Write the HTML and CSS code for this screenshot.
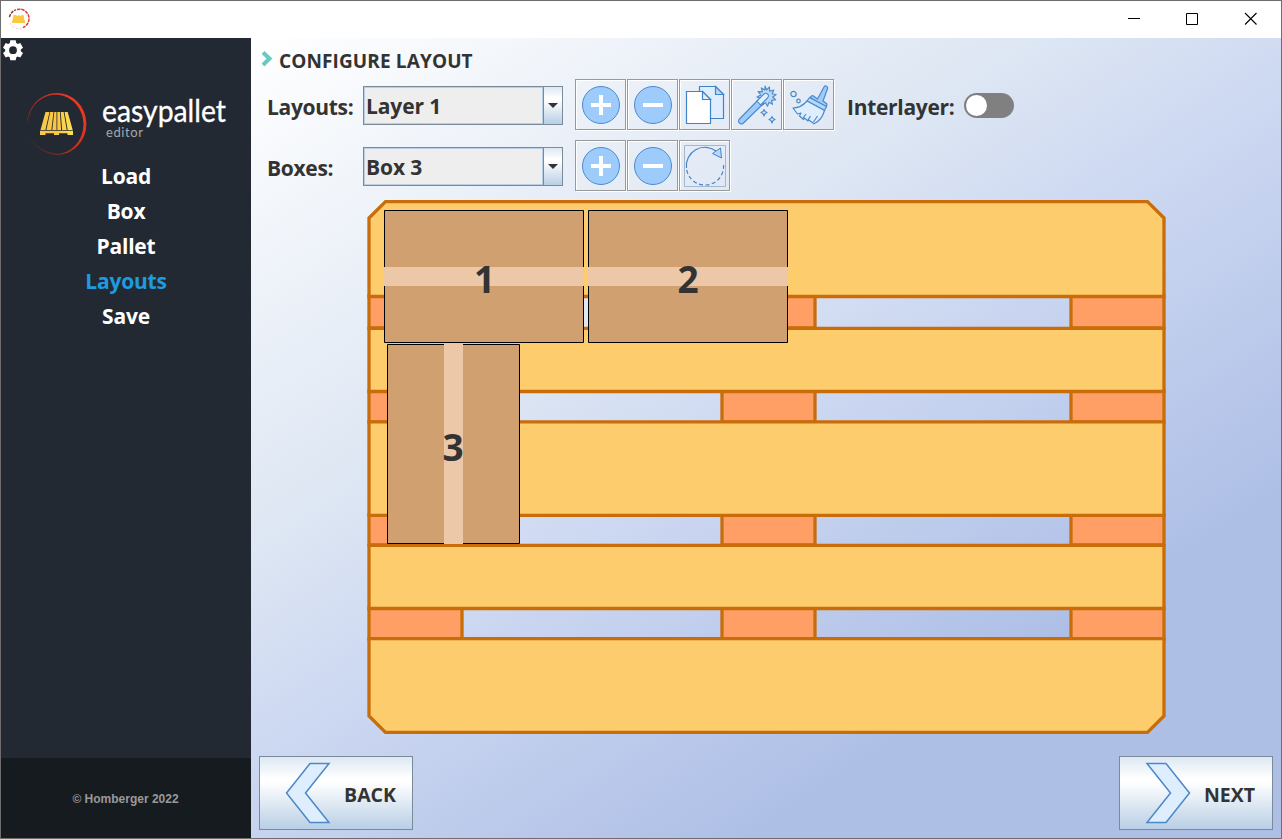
FILE: index.html
```
<!DOCTYPE html>
<html lang="en">
<head>
<meta charset="utf-8">
<title>easypallet editor</title>
<link rel="stylesheet" href="styles.css">
</head>
<body>
<svg class="defs" width="0" height="0">
  <defs>
    <linearGradient id="ring" x1="0" y1="0.85" x2="0.9" y2="0.3">
      <stop offset="0" stop-color="#232932"/><stop offset=".15" stop-color="#4a292d"/><stop offset=".5" stop-color="#b02e24"/><stop offset="1" stop-color="#f0361f"/>
    </linearGradient>
    <linearGradient id="gold" x1="0" y1="0" x2="1" y2="0">
      <stop offset="0" stop-color="#fbc94a"/><stop offset=".5" stop-color="#f9c442"/><stop offset="1" stop-color="#fbe253"/>
    </linearGradient>
    <symbol id="slats" viewBox="0 0 33 24">
      <path fill="url(#gold)" d="M5.500 0h4L5.400 18H.5zM10.200 0h3.300L11.400 18H6.400zM14.300 0h2.200v18h-4.200zM17.300 0h2.600l1.200 18h-3.800zM20.700 0h3l3 18h-4.600zM24.500 0h3.200l5 18h-5z"/>
      <path fill="url(#gold)" d="M0 18.700h33V23h-5.500v-1.800H19V23h-5v-1.800H5.500V23H0z"/>
    </symbol>
    <symbol id="plus" viewBox="0 0 40 40"><circle cx="20" cy="20" r="18.500" fill="#9dcbfb" stroke="#4d8bcc"/><path d="M20 10v20M10 20h20" stroke="#fff" stroke-width="4"/></symbol>
    <symbol id="minus" viewBox="0 0 40 40"><circle cx="20" cy="20" r="18.500" fill="#9dcbfb" stroke="#4d8bcc"/><path d="M10 20h20" stroke="#fff" stroke-width="4"/></symbol>
  </defs>
</svg>
<div class="window">
  <header class="titlebar">
    <svg class="app-icon" width="22" height="22" viewBox="0 0 22 22">
      <path d="M1.500 9A9.500 9.500 0 0 1 8 1.900" fill="none" stroke="#8b3035" stroke-width="1.500" stroke-dasharray="3 1"/>
      <path d="M9 1.500A9.500 9.500 0 0 1 15 19.500" fill="none" stroke="#e03c35" stroke-width="1.500" stroke-dasharray="3.500 .8"/>
      <path d="M2 15A9.500 9.500 0 0 0 14 20" fill="none" stroke="#f4c5c4" stroke-dasharray="2 2"/>
      <path d="M5.500 7H8l1.500 1L11 7l1.500 1L14 7h1.500l1 5.500H17V15H4v-2.500h.7z" fill="#fac93f"/>
    </svg>
    <svg class="controls" width="132" height="14" viewBox="0 0 132 14">
      <path d="M1 6.500h12" stroke="#000"/><path d="M59.500 1.500h11v11h-11z" fill="none" stroke="#000"/><path d="m118 1 11.500 11.500M129.500 1 118 12.500" stroke="#000" stroke-width="1.100"/>
    </svg>
  </header>
  <div class="body">
    <aside class="sidebar">
      <svg class="gear" width="24" height="24" viewBox="0 0 24 24"><path fill="#fff" fill-rule="evenodd" d="M9.300 1.200 8.800 4a8 8 0 0 0-1.600 1L4.700 4 2 8.700l2.200 1.700a8 8 0 0 0 0 1.800L2 14l2.700 4.500 2.500-1a8 8 0 0 0 1.600 1l.5 2.700h5.400l.5-2.700a8 8 0 0 0 1.600-1l2.500 1L22 14l-2.200-1.800a8 8 0 0 0 0-1.800L22 8.700 19.300 4l-2.500 1a8 8 0 0 0-1.600-1l-.5-2.800zM12 7.300a3.900 3.900 0 1 1 0 7.800 3.900 3.900 0 0 1 0-7.800z"/></svg>
      <div class="brand">
        <svg class="brand-mark" width="62" height="64" viewBox="0 0 62 64">
          <path fill="url(#ring)" d="M1 33A29.700 31 0 1 1 31 63Q12 61 4 46Q14 60 31 62A27.800 29.700 0 1 0 2.200 28z"/>
          <use href="#slats" x="14" y="20" width="33" height="24"/>
        </svg>
        <svg class="brand-name" width="140" height="64" viewBox="0 0 140 64">
          <text class="name" x="2" y="29.500" textLength="124" lengthAdjust="spacingAndGlyphs">easypallet</text>
          <text class="sub" x="6" y="44.500" textLength="37">editor</text>
        </svg>
      </div>
      <nav class="menu">
        <a>Load</a><a>Box</a><a>Pallet</a><a class="active">Layouts</a><a>Save</a>
      </nav>
      <footer class="copyright">© Homberger 2022</footer>
    </aside>
    <main class="content">
      <h1 class="heading"><svg width="12" height="18" viewBox="0 0 12 18"><path d="m2 2.500 6.500 6L2 15" fill="none" stroke="#66ccc2" stroke-width="4"/></svg><span>CONFIGURE LAYOUT</span></h1>
      <div class="row">
        <label class="label">Layouts:</label>
        <div class="combo"><span>Layer 1</span><i></i></div>
        <div class="tools">
          <button><svg width="40" height="40"><use href="#plus"/></svg></button>
          <button><svg width="40" height="40"><use href="#minus"/></svg></button>
          <button><svg width="40" height="40" viewBox="0 0 40 40" stroke="#4084c8" stroke-width="1.200"><path fill="#deeeff" d="M14.500 1.500h16l8 8v24h-24z"/><path fill="#b9d9fb" d="M30.500 1.500v8h8z"/><path fill="#fff" d="M1.500 6.500h16l8 8v24h-24z"/><path fill="#deeeff" d="M17.500 6.500v8h8z"/></svg></button>
          <button><svg width="40" height="40" viewBox="0 0 40 40" stroke="#4b89c9" stroke-width="1.100" stroke-linejoin="round">
            <path fill="#b8d9fb" d="m28 1 1.500 4 3-3 .2 4.200 4-1.200-1.500 3.700 4 .8-3.500 2.500 3 2.800-4.200.6 1 4-3.500-2.200-1.500 4-2-3.500-3 2.500.2-4-4 .6 2.200-3.600-4-1.200 4-2-2.800-3.400 4.200.3-1-4 3.600 2z"/>
            <path fill="#9dcbfb" d="m22 14 4.500 4.500L6 38.500q-1.500 1-3 0l-1-1q-1-1.500 0-3z"/><path fill="#e0f0ff" d="m20 16 7-7q1.500-1.500 3.500 0t0 4l-7 7z"/>
            <path fill="#deeeff" d="m27 24.500 1 2 2 1-2 1-1 2.500-1-2.500-2-1 2-1zM35 31.500l1 2 2 1-2 1-1 2.500-1-2.500-2-1 2-1z"/></svg></button>
          <button><svg width="40" height="40" viewBox="0 0 40 40" stroke="#4b89c9" stroke-width="1.200" stroke-linejoin="round">
            <circle cx="4.500" cy="9" r="2.700" fill="none"/><circle cx="9.500" cy="16" r="1.800" fill="none"/>
            <path fill="#9dcbfb" d="m28.500 14 6.500-12q1-1.500 2.500-.8t1 2.500L34 16l3.500 2.500q1 1.200-.5 3.500L21 12.500q2-2.500 3.500-1.500z"/>
            <path fill="#b5d7fa" d="m20.500 12.500 17 9-2 4-17.500-9.500z"/><path fill="#deeeff" d="m18 16 17.500 9.500Q33 35 25 38.800l-5.500-4-.5 1.200-3.500-3-1 1.500-4-3.500 1.500-3-3.500 1-4.500-6Q12 23 18 16z"/><path fill="none" d="m19 35 2.500-4M24.500 37l4-6M14 33l3-4"/></svg></button>
        </div>
        <label class="label inter">Interlayer:</label>
        <span class="toggle"></span>
      </div>
      <div class="row second">
        <label class="label">Boxes:</label>
        <div class="combo"><span>Box 3</span><i></i></div>
        <div class="tools">
          <button><svg width="40" height="40"><use href="#plus"/></svg></button>
          <button><svg width="40" height="40"><use href="#minus"/></svg></button>
          <button><svg width="44" height="44" viewBox="0 0 44 44"><path d="M1.500 1.500h41v41h-41z" fill="none" stroke="#a3b8cc"/><path d="M3.500 24A18.500 18.500 0 0 1 33 7" fill="none" stroke="#4485c9" stroke-width="1.200"/><path d="M40.500 21A18.500 18.500 0 0 1 3.500 24" fill="none" stroke="#4485c9" stroke-width="1.200" stroke-dasharray="4 2.500"/><path d="M29.500 9.500 37.500 4l1 10z" fill="#b9d9fb" stroke="#4485c9"/></svg></button>
        </div>
      </div>
      <svg class="pallet" width="800" height="536" viewBox="366 199 800 536">
        <g stroke="#c96d0b" stroke-width="3.300">
          <g fill="#ff9f66">
            <path d="M369 296h93v32h-93zM722 296h93v32h-93zM1071 296h93v32h-93z"/>
            <path d="M369 391h93v31h-93zM722 391h93v31h-93zM1071 391h93v31h-93z"/>
            <path d="M369 515h93v30h-93zM722 515h93v30h-93zM1071 515h93v30h-93z"/>
            <path d="M369 608h93v31h-93zM722 608h93v31h-93zM1071 608h93v31h-93z"/>
          </g>
          <g fill="#fdcc6d">
            <path d="M369 296.500V218l16.500-16.300h762L1164 218v78.500z"/>
            <path d="M369 328.300h795v63.200H369zM369 421.800h795v93.600H369zM369 545.300h795v63.200H369z"/>
            <path d="M369 638.700h795V716l-16.500 16.300h-762L369 716z"/>
          </g>
        </g>
        <g fill="#d0a071" stroke="#000">
          <path d="M384.500 210.500h199v132h-199zM588.500 210.500h199v132h-199zM387.500 344.500h132v199h-132z"/>
        </g>
        <path fill="#ecc8a9" d="M384 267h200v19H384zM588 267h200v19H588zM444 344h19v200h-19z"/>
        <g class="box-no"><text x="484.500" y="293">1</text><text x="688" y="293">2</text><text x="453" y="461">3</text></g>
      </svg>
      <div class="actions">
        <button class="nav"><svg width="46" height="64" viewBox="0 0 46 64"><path d="M25 2.500h19L20.500 32 44 61.500H25L1.500 32z" fill="#deeeff" stroke="#4a88c9" stroke-width="1.500"/></svg><span>BACK</span></button>
        <button class="nav next"><svg width="46" height="64" viewBox="0 0 46 64"><path d="M21 2.500H2L25.500 32 2 61.500h19L44.500 32z" fill="#deeeff" stroke="#4a88c9" stroke-width="1.500"/></svg><span>NEXT</span></button>
      </div>
    </main>
  </div>
</div>
</body>
</html>
```
FILE: styles.css
```
* { box-sizing: border-box; }
body { margin: 0; font-family: "Open Sans", "Noto Sans", sans-serif; font-weight: 700; color: #333; overflow: hidden; }
.defs { position: absolute; }
.window { width: 1282px; height: 839px; border: 1px solid #6f6d6d; display: flex; flex-direction: column; }
.titlebar { height: 37px; flex: none; background: #fff; display: flex; align-items: center; justify-content: space-between; padding: 0 22px 1px 7px; }
.body { flex: 1; display: flex; min-height: 0; }
.sidebar { width: 250px; background: #232932; display: flex; flex-direction: column; }
.gear { flex: none; display: block; margin: 1px 0 0 0; }
.brand { display: flex; height: 64px; margin: 29px 0 0 25px; }
.brand-name { margin-left: 12px; overflow: visible; }
.brand-mark { flex: none; }
.name { font: 400 31px Lato, sans-serif; fill: #fff; stroke: #fff; stroke-width: .3px; }
.sub { font: 400 13px Lato, sans-serif; fill: #a5a8ac; }
.menu { display: flex; flex-direction: column; align-items: center; margin-top: 3px; color: #fff; }
.menu a { height: 35px; line-height: 35px; font-size: 21px; letter-spacing: -.2px; }
.menu .active { color: #1e9be0; }
.copyright { margin-top: auto; height: 80px; background: #161b20; color: #999; font: 700 12px/82px "Liberation Sans", Arial, sans-serif; text-align: center; padding-right: 1px; }
.content { flex: 1; display: flex; flex-direction: column; background: linear-gradient(147deg, #fff 0%, #dde6f3 35%, #ced9f2 48%, #aebfe6 76.500%, #aebfe6 100%); }
.heading { display: flex; align-items: center; gap: 6px; height: 44px; margin: 0; padding-left: 10px; font-size: 19px; font-weight: 700; letter-spacing: .12px; }
.heading svg { margin-bottom: 2px; }
.heading span { padding-top: 2px; }
.row { display: flex; align-items: center; height: 45px; padding-left: 16px; }
.row.second { margin-top: 16px; }
.label { width: 96px; font-size: 21px; line-height: 28px; letter-spacing: -.3px; padding-top: 4px; }
.combo { width: 200px; height: 39px; border: 1px solid #7a8a99; display: flex; background: #eee; margin-top: 2px; }
.combo span { flex: 1; border: 1px solid #b8cfe5; font-size: 21px; line-height: 37px; padding-left: 1px; letter-spacing: -.1px; }
.combo i { width: 19px; border-left: 1px solid #7a8a99; display: flex; align-items: center; justify-content: center; background: linear-gradient(#dde8f3 0%, #fff 30%, #fff 35%, #b8cfe5 100%); }
.combo i::before { content: ""; border: 5px solid transparent; border-top-color: #333; border-bottom: 0; }
.tools { display: flex; gap: 1px; margin-left: 12px; }
.tools button { width: 51px; height: 51px; padding: 0; border: 1px solid #999; box-shadow: 1px 1px #fff, inset 1px 1px #fff; background: transparent; display: flex; align-items: center; justify-content: center; }
.inter { width: 107px; margin-left: 13px; }
.toggle { width: 50px; height: 25px; border-radius: 13px; background: #808080; margin: 1px 0 0 10px; padding: 2px; }
.toggle::before { content: ""; display: block; width: 21px; height: 21px; border-radius: 50%; background: #fff; }
.pallet { display: block; margin: 11px 0 0 115px; flex: none; }
.box-no { font-size: 37px; text-anchor: middle; fill: #333; }
.actions { display: flex; justify-content: space-between; margin: auto 8px 8px; }
.nav { width: 154px; height: 74px; border: 1px solid #7a8a99; padding: 0 16px 0 25px; display: flex; align-items: center; justify-content: space-between; background: linear-gradient(#dde8f3 0%, #fff 30%, #fff 35%, #b8cfe5 100%); color: #333; font: 700 19.500px "Open Sans", "Noto Sans", sans-serif; }
.nav span { padding-top: 2px; }
.next { padding-right: 17px; }
```
